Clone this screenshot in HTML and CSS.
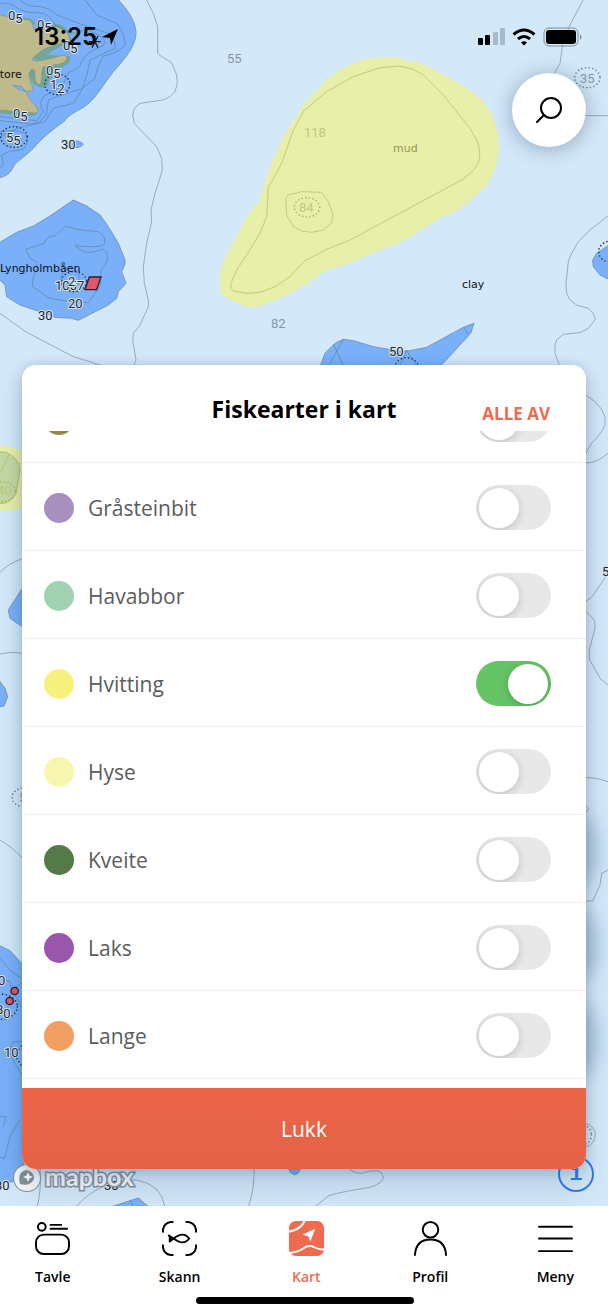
FILE: index.html
```html
<!DOCTYPE html>
<html lang="nb">
<head>
<meta charset="utf-8">
<meta name="viewport" content="width=device-width, initial-scale=1">
<title>Fiskearter i kart</title>
<link rel="stylesheet" href="styles.css">
</head>
<body>
<div class="app">
  <main class="map-view">
    <svg class="map" viewBox="0 0 608 1206" preserveAspectRatio="xMidYMin slice" aria-hidden="true">
      <svg x="0" y="0" width="608" height="1206" viewBox="0 0 1824 3618">
        <g class="water">
          <path d="M-5-5H350C380 25 405 60 408 95C408 130 390 160 340 215C305 260 285 300 250 322C220 340 205 345 195 362C150 395 130 410 100 445C70 475 45 485 38 505C28 525 10 530-5 534Z"/>
          <path d="M220 600L260 618L300 645L325 680L355 730L375 780L375 792L365 815L378 850L355 875L350 895L325 915L235 961L215 955L165 952L120 935L60 915L20 890L15 855L-5 835V730L50 697L100 678L150 648Z"/>
          <path d="M960 1100L975 1060L1005 1030L1030 1018L1060 1022L1120 1040L1200 1054L1230 1052L1280 1042L1390 982L1422 970L1412 1000L1320 1100Z"/>
          <path d="M1830 733L1790 760L1778 780L1780 800L1800 825L1830 840Z"/>
          <path d="M70 1760L25 1830L30 1855L70 1882Z"/>
          <path d="M-5 2038L15 2065L23 2090L12 2118L-5 2121Z"/>
          <path d="M-5 2835L30 2852L70 2895V3530C40 3550 20 3548-5 3545Z"/>
          <path d="M335 3620L415 3594L445 3620Z"/>
          <path d="M865 3504L872 3518L885 3525L896 3518L902 3504Z"/>
          <path d="M212 425Q238 418 250 433Q238 448 212 440Z"/>
        </g>
        <path class="shore" d="M-5 42C30 44 40 60 60 55C80 50 98 55 105 70C125 85 150 75 175 72C200 80 205 95 215 120C195 135 165 145 140 165L205 168C225 185 190 200 160 215L140 262C110 270 90 245 85 220C90 205 105 200 110 180C90 178 100 150 120 140L160 120L110 75ZM-5 330L115 325Q115 350 90 348L-5 340Z"/>
        <path class="land" d="M-5 45C25 46 40 62 62 62C80 54 98 60 100 85C110 105 135 78 172 80C190 92 208 95 208 118C190 132 140 138 120 156C105 168 95 175 97 180C110 190 160 172 195 165C208 172 200 185 180 192L130 200C122 215 128 245 120 252C108 258 103 235 105 212C98 202 90 210 87 222C88 240 97 255 100 272L78 275C85 300 115 320 114 335C100 345 88 332 60 335L-5 330Z"/>
        <path class="water" d="M38 256L65 260L78 275L60 270Z"/>
        <g class="contour">
          <path d="M0 10Q30 5 50 22T110 38T165 75L215 100L262 88L305 110Q325 130 300 142Q260 155 245 185Q240 205 205 218L188 258L130 290Q115 310 130 335L110 362L0 350"/>
          <path d="M60 0Q80 20 120 20Q150 25 170 45L250 75L325 100Q350 120 345 145L270 180L262 220L248 265L170 290L145 300L140 340Q120 375 90 372L0 362"/>
          <path d="M255 0L290 45L350 70Q378 105 375 138Q350 160 310 168Q290 200 285 235L250 262L220 310L160 325L135 365L60 382L0 410"/>
          <path d="M0 395Q70 385 82 410Q85 445 60 450Q30 450 5 465L10 495L0 502M15 412Q50 395 68 425"/>
          <path d="M198 678L225 687L245 690L295 695Q320 710 313 733Q300 745 225 737Q250 760 275 757L310 748Q325 755 322 782L303 812L302 855L265 908L210 905L150 895L98 860Q95 830 112 808L110 785L90 775L78 748L133 730Q135 710 165 707Z"/>
          <path d="M182 835Q190 800 220 805Q245 820 235 850Q210 875 182 835"/>
          <path d="M440 0L460 40L473 80L473 160L485 170L515 188L530 225L532 250L525 275L510 290L490 300L420 310L403 325L398 345L403 370L470 440L485 475L487 510L478 540L465 580L453 630L455 665L440 730L430 800L433 850L445 900L445 920L420 975L400 1000L398 1020L408 1080L400 1100"/>
          <path d="M0 940L80 997L220 1070L310 1098"/>
          <path d="M1752-5L1710 75L1690 120L1680 190L1660 225M1740 347H1830"/>
          <path d="M1830 643L1770 690L1735 725L1712 765L1705 785L1698 850L1700 880L1710 900L1730 915L1765 925L1780 940L1786 958L1765 985L1740 998L1690 1003L1670 1020L1665 1035V1060L1680 1100"/>
          <path d="M1000 1032L1032 1100M1030 1018L985 1100M1392 982L1404 1004M1200 1095L1220 1052L1248 1095"/>
          <path d="M1750 1180Q1825 1225 1815 1275Q1805 1300 1775 1330Q1760 1350 1755 1370M1750 1388Q1785 1395 1830 1355"/>
          <path d="M1824 1720L1775 1792L1755 1805M1755 1830L1784 1862L1785 1885L1768 1950V1978L1800 2035L1824 2055M1750 2332L1790 2335L1824 2345M1755 2415L1766 2425L1758 2437M1824 2610L1805 2620L1800 2655L1778 2703H1755"/>
          <path d="M0 1717Q25 1690 70 1675M0 2520L30 2540L70 2575M0 1962L35 1957L70 1960M0 2875L35 2915L70 2940M0 2935L30 2945L35 2970M70 2945L35 2970L20 3010M40 2975L66 3025M66 3125H40Q28 3140 32 3165L45 3190L66 3225M0 3350H18L10 3380M60 3360L30 3410L14 3475L0 3472"/>
          <path d="M120 3500Q125 3570 112 3618M230 3618Q300 3540 410 3540Q485 3555 494 3618M762 3500Q765 3560 746 3618M1045 3504Q1060 3520 1085 3520Q1145 3500 1150 3530Q1150 3550 1110 3562Q1000 3580 985 3588L945 3620M390 3602L400 3618"/>
          <path d="M1755 3370Q1780 3375 1786 3400Q1785 3435 1758 3440"/>
        </g>
        <path class="zone" d="M912 312L850 410L810 500L795 545L775 612Q765 615 740 650L700 725L672 780L658 830L660 875Q670 895 745 922H770L850 890L912 858L980 810L1050 790L1110 762L1200 728L1320 655L1380 627L1440 575C1480 540 1497 480 1497 440C1497 400 1485 360 1465 325C1445 290 1400 265 1370 245L1290 203L1255 185L1220 182L1190 171L1110 175C1040 190 990 225 970 250Z"/>
        <path class="zone" d="M-5 1338Q40 1330 70 1360V1525Q35 1535-5 1530Z"/>
        <path class="zone-deep" d="M-5 1357Q20 1350 45 1375Q60 1390 60 1410L48 1480Q30 1515-5 1510Z"/>
        <g class="contour contour-zone">
          <path d="M912 332L980 275L1060 230L1140 203L1200 198L1240 208L1270 225L1330 285L1410 385L1430 420Q1445 455 1436 485Q1428 510 1385 540L1050 720L980 748L912 784L870 830L825 860L780 877L740 880L700 873Q688 860 695 845L710 810L740 765L780 700L800 650L805 560L818 540L845 490L880 390Z"/>
          <path d="M857 595L865 585L905 575L965 577L985 605L998 640L995 668L970 690L935 697L905 693L880 680L860 645Z"/>
          <path d="M28 1362L0 1420"/>
        </g>
        <g class="danger">
          <ellipse cx="172" cy="253" rx="38" ry="31"/>
          <ellipse cx="42" cy="411" rx="40" ry="31"/>
          <ellipse cx="222" cy="845" rx="38" ry="30"/>
          <ellipse cx="1220" cy="1105" rx="36" ry="32"/>
          <ellipse cx="1830" cy="755" rx="34" ry="31"/>
          <ellipse cx="0" cy="3020" rx="52" ry="38"/>
          <path d="M70 3130L45 3165L66 3200"/>
        </g>
        <g class="danger danger-soft">
          <ellipse cx="1762" cy="233" rx="38" ry="30"/>
          <ellipse cx="72" cy="2392" rx="36" ry="28"/>
          <ellipse cx="1756" cy="3405" rx="18" ry="26"/>
        </g>
        <g class="danger danger-zone">
          <ellipse cx="921" cy="622" rx="38" ry="29"/>
          <ellipse cx="8" cy="1475" rx="38" ry="30"/>
        </g>
        <g class="marks">
          <path d="M268 831H303L290 869H255Z"/>
          <circle cx="44" cy="2973" r="11"/>
          <circle cx="29" cy="3003" r="11"/>
        </g>
        <path class="rock" d="M266 125H302M276 108L294 143M294 108L276 143"/>
      </svg>
      <g class="label label-place">
        <text x="-6" y="78">store</text>
        <text x="0" y="272">Lyngholmbåen</text>
        <text x="462" y="288">clay</text>
        <text class="label-zone" x="393" y="152">mud</text>
      </g>
      <g class="label label-depth">
        <text x="8" y="20">0<tspan dy="3">5</tspan></text>
        <text x="37" y="29">0<tspan dy="3">5</tspan></text>
        <text x="63" y="50">0<tspan dy="3">5</tspan></text>
        <text x="46" y="75">0<tspan dy="3">5</tspan></text>
        <text x="50" y="89">1<tspan dy="4">2</tspan></text>
        <text x="13" y="118">0<tspan dy="3">5</tspan></text>
        <text x="6" y="142">5<tspan dy="3">5</tspan></text>
        <text x="61" y="149">30</text>
        <text x="55" y="290">1057</text>
        <text x="68" y="286">2</text>
        <text x="68" y="308">20</text>
        <text x="38" y="320">30</text>
        <text x="389" y="356">50</text>
        <text x="602" y="576">5</text>
        <text x="-2" y="985">0</text>
        <text x="-4" y="1014">8<tspan dy="4">0</tspan></text>
        <text x="4" y="1057">10</text>
        <text x="-5" y="1190">30</text>
        <text x="104" y="1190">30</text>
      </g>
      <g class="label label-sounding">
        <text x="227" y="63">55</text>
        <text x="271" y="328">82</text>
        <text x="580" y="83">35</text>
        <text x="19" y="802">5</text>
      </g>
      <g class="label label-sounding label-faint">
        <text x="304" y="137">118</text>
        <text x="299" y="212">84</text>
        <text x="-3" y="495">40</text>
      </g>
      <g class="map-shade">
        <ellipse cx="580" cy="850" rx="18" ry="36"/>
        <ellipse cx="580" cy="945" rx="18" ry="36"/>
        <ellipse cx="580" cy="1040" rx="18" ry="36"/>
      </g>
    </svg>

    <header class="status-bar">
      <span class="clock">13:25
        <svg class="icon-location" viewBox="0 0 16 16" aria-hidden="true"><path d="M16 0L0 8L8 9L9 16Z"/></svg>
      </span>
      <span class="indicators">
        <svg class="icon-signal" viewBox="0 0 27 17" aria-hidden="true"><rect x="0" y="10" width="5" height="7" rx="1"/><rect x="7" y="7" width="5" height="10" rx="1"/><rect class="dim" x="15" y="4" width="5" height="13" rx="1"/><rect class="dim" x="22" y="0" width="5" height="17" rx="1"/></svg>
        <svg class="icon-wifi" viewBox="0 0 24 18" aria-hidden="true"><path d="M1.500 6.500Q12-2.500 22.500 6.500M6 11Q12 6 18 11"/><path class="wifi-dot" d="M9 14.500Q12 12 15 14.500L12 17.500Z"/></svg>
        <svg class="icon-battery" viewBox="0 0 40 20" aria-hidden="true"><rect class="battery-shell" x="1" y="1" width="34" height="18" rx="5"/><rect x="3" y="3" width="30" height="14" rx="3"/><path class="battery-shell-fill" d="M37 7Q40 10 37 13Z"/></svg>
      </span>
    </header>

    <button class="search" type="button" aria-label="Søk">
      <svg viewBox="0 0 28 28" aria-hidden="true"><circle cx="16" cy="12" r="10"/><path d="M9 19L2 26"/></svg>
    </button>

    <a class="mapbox" href="#mapbox">
      <svg viewBox="0 0 30 30" aria-hidden="true"><circle class="logo-disc" cx="15" cy="15" r="13"/><path class="logo-drop" d="M8 21Q5 9 14 7A8 8 0 0 1 22 16Q18 24 8 21Z"/><path class="logo-star" d="M16 9L17.500 12.500L21 14L17.500 15.500L16 19L14.500 15.500L11 14L14.500 12.500Z"/></svg>
      <span>mapbox</span>
    </a>
    <button class="info" type="button" aria-label="Om kartet">i</button>

    <section class="sheet" aria-labelledby="sheet-title">
      <div class="sheet-header">
        <h1 id="sheet-title">Fiskearter i kart</h1>
        <button class="all-off" type="button">ALLE AV</button>
      </div>
      <div class="species-scroll">
        <ul class="species">
          <li><span class="dot dot-olive"></span><span class="name"></span><input type="checkbox" class="switch" aria-label="Art"></li>
          <li><span class="dot dot-lilac"></span><label class="name" for="s1">Gråsteinbit</label><input type="checkbox" class="switch" id="s1"></li>
          <li><span class="dot dot-mint"></span><label class="name" for="s2">Havabbor</label><input type="checkbox" class="switch" id="s2"></li>
          <li><span class="dot dot-yellow"></span><label class="name" for="s3">Hvitting</label><input type="checkbox" class="switch" id="s3" checked></li>
          <li><span class="dot dot-cream"></span><label class="name" for="s4">Hyse</label><input type="checkbox" class="switch" id="s4"></li>
          <li><span class="dot dot-green"></span><label class="name" for="s5">Kveite</label><input type="checkbox" class="switch" id="s5"></li>
          <li><span class="dot dot-purple"></span><label class="name" for="s6">Laks</label><input type="checkbox" class="switch" id="s6"></li>
          <li><span class="dot dot-orange"></span><label class="name" for="s7">Lange</label><input type="checkbox" class="switch" id="s7"></li>
        </ul>
      </div>
      <button class="close" type="button">Lukk</button>
    </section>
  </main>

  <nav class="tabs">
    <div class="tab-row">
      <a href="#tavle"><svg viewBox="0 0 36 36" aria-hidden="true"><circle cx="7" cy="6" r="4"/><path d="M16 4H27M16 8H33"/><rect x="1" y="14" width="34" height="20" rx="8"/></svg>Tavle</a>
      <a href="#skann"><svg viewBox="0 0 36 36" aria-hidden="true"><path d="M1 11V9Q2 2 9 1H11M25 1H27Q34 2 35 9V11M35 25V27Q34 34 27 35H25M11 35H9Q2 34 1 27V25"/><path d="M7 15L12 18Q22 10 28 18Q22 26 12 18L8 21"/><path class="solid" d="M7 14L12 18L7 22Z"/></svg>Skann</a>
      <a class="active" href="#kart" aria-current="page"><svg viewBox="0 0 36 36" aria-hidden="true"><rect class="tile" x="0" y="0" width="36" height="36" rx="7"/><path class="cut" d="M0 11Q12 9 16 0M0 33Q10 32 15 28T26 27T36 29"/><path class="arrow" d="M27 8L14 14L20 16L22 21Z"/></svg>Kart</a>
      <a href="#profil"><svg viewBox="0 0 36 36" aria-hidden="true"><circle cx="18" cy="9" r="8"/><path d="M2 35Q3 19 18 19T34 35"/></svg>Profil</a>
      <a href="#meny"><svg viewBox="0 0 36 36" aria-hidden="true"><path d="M1 6H35M1 18H35M1 31H35"/></svg>Meny</a>
    </div>
    <div class="home-indicator"></div>
  </nav>
</div>
</body>
</html>
```
FILE: styles.css
```css
* { box-sizing: border-box; }

body {
  margin: 0;
  background: #fff;
  color: #000;
  font-family: "Open Sans", "Noto Sans", sans-serif;
}

button {
  border: 0;
  padding: 0;
  font: inherit;
  cursor: pointer;
}

a { color: inherit; text-decoration: none; }

.app {
  display: flex;
  flex-direction: column;
  min-height: 100vh;
}

.map-view {
  position: relative;
  flex: 1;
  display: flex;
  flex-direction: column;
  padding-bottom: 37px;
  overflow: hidden;
  background: #d3e8f9;
}

/* Chart */
.map {
  position: absolute;
  inset: 0;
  width: 100%;
  height: 100%;
}
.water { fill: #79b0f9; stroke: #7497c4; stroke-width: 3; }
.shore { fill: #70a79a; }
.land { fill: #bfba8c; stroke: #8f9078; stroke-width: 2; }
.contour { fill: none; stroke: #5c7080; stroke-opacity: .5; stroke-width: 3; stroke-linejoin: round; }
.contour-zone { stroke: #b3b96f; stroke-opacity: .7; }
.zone { fill: #e8efa9; }
.zone-deep { fill: #c3d9a3; stroke: #b3bd80; stroke-width: 3; }
.danger { fill: none; stroke: #22384f; stroke-width: 5; stroke-linecap: round; stroke-dasharray: 0 11; }
.danger-soft { stroke: #6d7f90; }
.danger-zone { stroke: #a9ad70; }
.marks { fill: #e0566c; stroke: #29202c; stroke-width: 4; }
.rock { fill: none; stroke: #12202e; stroke-width: 4; }
.label { paint-order: stroke; stroke-linejoin: round; }
.label-place { font: 11px "DejaVu Sans", sans-serif; fill: #111; }
.label-zone { fill: #9a9850; }
.label-depth { font: 13px Roboto, sans-serif; fill: #1c2833; stroke: #d9e6f0; stroke-width: 2px; }
.label-sounding { font: 13px Roboto, sans-serif; fill: #8799a8; }
.label-faint { fill: #c2c780; }
.map-shade { fill: #2c5070; opacity: .25; filter: blur(9px); }

/* Status bar */
.status-bar {
  position: relative;
  display: flex;
  justify-content: space-between;
  align-items: center;
  height: 73px;
  padding: 0 25px 0 34px;
}
.clock {
  display: flex;
  align-items: center;
  gap: 5px;
  font: 600 24px Inter, sans-serif;
}
.icon-location { width: 16px; height: 16px; }
.indicators { display: flex; align-items: center; gap: 7px; }
.icon-signal { width: 27px; height: 17px; }
.icon-wifi { width: 24px; height: 18px; fill: none; stroke: #000; stroke-width: 3; }
.icon-battery { width: 40px; height: 20px; }
.dim { fill: #a9bac8; }
.wifi-dot { fill: #000; stroke: none; }
.battery-shell { fill: none; stroke: #7e8c97; stroke-width: 1; }
.battery-shell-fill { fill: #7e8c97; }

.search {
  position: relative;
  display: grid;
  place-items: center;
  align-self: flex-end;
  width: 74px;
  height: 74px;
  margin: 0 22px 32px;
  border-radius: 50%;
  background: #fff;
  box-shadow: 0 2px 20px rgba(20, 50, 80, .35);
}
.search svg { width: 28px; height: 28px; fill: none; stroke: #000; stroke-width: 2; stroke-linecap: round; }

/* Attribution over the chart */
.mapbox {
  position: absolute;
  left: 12px;
  bottom: 13px;
  display: flex;
  align-items: center;
  gap: 3px;
  font: 700 25px/26px Lato, sans-serif;
  color: #f4f7fa;
  -webkit-text-stroke: 3px #84919d;
  paint-order: stroke;
}
.mapbox span { padding-bottom: 4px; }
.mapbox svg { width: 30px; height: 30px; }
.logo-disc { fill: #f4f7fa; stroke: #84919d; stroke-width: 2; }
.logo-drop { fill: #84919d; }
.logo-star { fill: #fff; }
.info {
  position: absolute;
  right: 14px;
  bottom: 14px;
  width: 36px;
  height: 36px;
  border: 2px solid #2f7bf2;
  border-radius: 50%;
  background: none;
  color: #2f7bf2;
  font: 700 22px/34px "Liberation Mono", monospace;
}

/* Sheet */
.sheet {
  position: relative;
  display: flex;
  flex-direction: column;
  margin: auto 22px 0;
  border-radius: 14px;
  overflow: hidden;
  background: #fff;
  box-shadow: 0 2px 14px rgba(20, 50, 80, .25), 0 20px 30px rgba(20, 50, 80, .12);
}
.sheet-header {
  display: grid;
  grid-template-columns: 1fr auto 1fr;
  align-items: start;
  height: 66px;
  padding: 28px 36px 0;
}
h1 {
  grid-column: 2;
  margin: 0;
  font-size: 23px;
  line-height: 32px;
  font-weight: 700;
}
.all-off {
  justify-self: end;
  margin-top: 9px;
  background: none;
  color: #ee6b50;
  font-size: 17px;
  line-height: 24px;
  font-weight: 700;
}
.species-scroll { overflow: hidden; padding-bottom: 9px; }
.species {
  list-style: none;
  margin: -56px 0 0;
  padding: 0;
}
.species li {
  display: flex;
  align-items: center;
  gap: 14px;
  height: 88px;
  padding: 2px 35px 0 22px;
  border-bottom: 1px solid #efefef;
}
.name { flex: 1; font-size: 21px; line-height: 30px; color: #5c5c5c; }
.dot { width: 30px; height: 30px; border-radius: 50%; }
.dot-olive { background: #938848; }
.dot-lilac { background: #a790c0; }
.dot-mint { background: #a0d2b0; }
.dot-yellow { background: #f7f27d; }
.dot-cream { background: #f9f6b0; }
.dot-green { background: #547a48; }
.dot-purple { background: #9a55ac; }
.dot-orange { background: #f19e62; }

.switch {
  appearance: none;
  display: flex;
  align-items: center;
  width: 75px;
  height: 45px;
  margin: 0;
  padding: 0 3px;
  border-radius: 23px;
  overflow: hidden;
  background: #e8e8e8;
}
.switch::before {
  content: "";
  width: 40px;
  height: 40px;
  border-radius: 50%;
  background: #fff;
  box-shadow: 0 2px 8px rgba(0, 0, 0, .18);
}
.switch:checked { justify-content: flex-end; background: #65c466; }

.close {
  height: 81px;
  background: linear-gradient(#eb6548, #e56247);
  color: #fff;
  font-size: 21px;
  font-weight: 500;
}

/* Tab bar */
.tabs { position: relative; padding: 15px 34px 12px 35px; background: #fff; }
.tab-row { display: flex; justify-content: space-between; }
.tab-row a {
  display: flex;
  flex-direction: column;
  align-items: center;
  gap: 11px;
  font-size: 14px;
  line-height: 20px;
  font-weight: 600;
}
.tab-row svg {
  width: 35px;
  height: 35px;
  overflow: visible;
  fill: none;
  stroke: #000;
  stroke-width: 2;
  stroke-linecap: round;
  stroke-linejoin: round;
}
.tab-row .solid { fill: #000; stroke: none; }
.tab-row .tile { fill: #ee6b50; stroke: none; }
.tab-row .cut { stroke: #fff; }
.tab-row .arrow { fill: #fff; stroke: none; }
.tab-row .active { color: #ee6b50; }
.home-indicator {
  width: 218px;
  height: 7px;
  margin: 10px auto 0;
  border-radius: 4px;
  background: #000;
}
```
